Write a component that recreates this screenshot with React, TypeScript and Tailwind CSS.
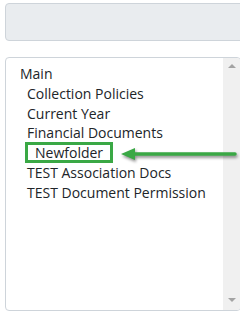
const folders = [
  "Collection Policies",
  "Current Year",
  "Financial Documents",
  "Newfolder",
  "TEST Association Docs",
  "TEST Document Permissions",
];

const App = () => {
  return (
    <div className="relative w-[240px] h-[321px] overflow-hidden bg-white font-['Open_Sans',sans-serif]">
      {/* disabled input */}
      <div className="ml-[5px] mt-[3px] h-[38px] w-[240px] rounded-[4px] border border-[#ced4da] bg-[#e9ecef]" />

      {/* folder list */}
      <div className="ml-[5px] mt-[16px] flex h-[254px] w-[236px] overflow-hidden rounded-[4px] border border-[#ced4da]">
        <div className="min-w-0 flex-1 pl-[14px] pr-[17px] pt-[6px]">
          <div className="overflow-hidden whitespace-nowrap text-[14px] leading-[19.8px] text-[#212529]">
            <div>Main</div>
            {folders.map((name) =>
              name === "Newfolder" ? (
                <div key={name} className="pl-[7px]">
                  <span className="relative ml-[8px]">
                    {name}
                    <span className="absolute -left-[10px] -right-[10px] -top-[1px] -bottom-[1px] border-[3px] border-[#3aa845]" />
                  </span>
                </div>
              ) : (
                <div key={name} className="pl-[7px]">
                  {name}
                </div>
              )
            )}
          </div>
        </div>
        <div className="flex w-[17px] shrink-0 flex-col items-center justify-between bg-[#f0f0f0] pt-[6px] pb-[8px]">
          <div className="h-0 w-0 border-x-[4px] border-b-[4px] border-x-transparent border-b-[#a3a3a3]" />
          <div className="h-0 w-0 border-x-[4px] border-t-[4px] border-x-transparent border-t-[#a3a3a3]" />
        </div>
      </div>

      {/* annotation arrow */}
      <svg
        className="absolute left-[115px] top-[144px] drop-shadow-[1px_2px_1.5px_rgba(0,0,0,0.45)]"
        width="125"
        height="22"
        viewBox="0 0 125 22"
      >
        <line x1="120" y1="10" x2="16" y2="10" stroke="#3aa845" strokeWidth="3.5" strokeLinecap="round" />
        <polygon points="6,10 20,4 20,16" fill="#3aa845" />
      </svg>
    </div>
  );
};

export default App;
